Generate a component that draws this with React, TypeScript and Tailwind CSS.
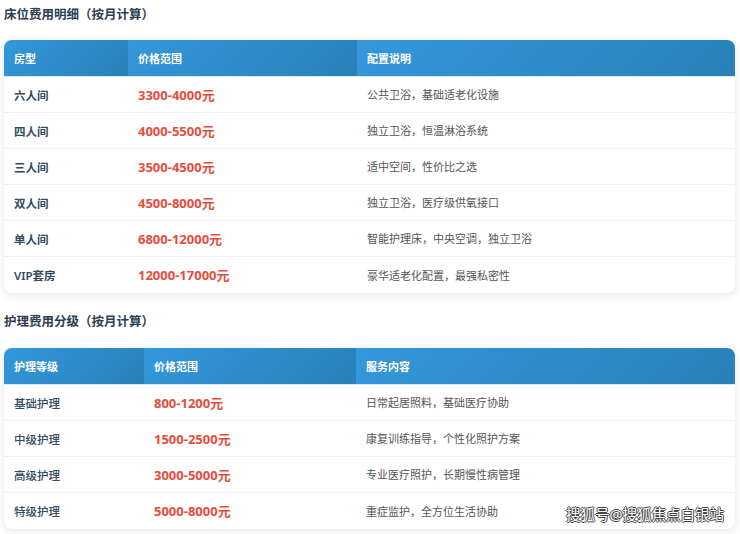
import React from "react";

const font = { fontFamily: '"Noto Sans", "Noto Sans CJK SC", sans-serif' };

type Row = [string, string, string];

const beds: Row[] = [
  ["六人间", "3300-4000元", "公共卫浴，基础适老化设施"],
  ["四人间", "4000-5500元", "独立卫浴，恒温淋浴系统"],
  ["三人间", "3500-4500元", "适中空间，性价比之选"],
  ["双人间", "4500-8000元", "独立卫浴，医疗级供氧接口"],
  ["单人间", "6800-12000元", "智能护理床，中央空调，独立卫浴"],
  ["VIP套房", "12000-17000元", "豪华适老化配置，最强私密性"],
];

const care: Row[] = [
  ["基础护理", "800-1200元", "日常起居照料，基础医疗协助"],
  ["中级护理", "1500-2500元", "康复训练指导，个性化照护方案"],
  ["高级护理", "3000-5000元", "专业医疗照护，长期慢性病管理"],
  ["特级护理", "5000-8000元", "重症监护，全方位生活协助"],
];

function Table({
  heads,
  rows,
  cols,
  firstWeight,
}: {
  heads: [string, string, string];
  rows: Row[];
  cols: string;
  firstWeight: string;
}) {
  return (
    <div className="rounded-lg overflow-hidden bg-white shadow-[0_2px_10px_rgba(0,0,0,0.1)]">
      <div className={`grid ${cols} h-[37px] border-b border-[#d6e9f7]`}>
        {heads.map((h) => (
          <div
            key={h}
            className="flex items-center pl-[10px] pt-[3px] text-[11px] font-bold text-white bg-[linear-gradient(135deg,#3498db,#2980b9)]"
          >
            {h}
          </div>
        ))}
      </div>
      {rows.map((r, i) => (
        <div
          key={r[0]}
          className={`grid ${cols} h-[36px] items-center pt-[2px] ${
            i < rows.length - 1 ? "border-b border-[#f0f0f0]" : ""
          }`}
        >
          <div className={`pl-[10px] text-[11.5px] ${firstWeight} text-[#34495e]`}>{r[0]}</div>
          <div className="pl-[10px] text-[13px] font-bold text-[#e74c3c]">{r[1]}</div>
          <div className="pl-[10px] text-[11px] text-[#555]">{r[2]}</div>
        </div>
      ))}
    </div>
  );
}

export default function App() {
  return (
    <div style={font} className="w-[740px] h-[534px] bg-white relative overflow-hidden">
      <div className="pl-[4px] pr-[5px]">
        <div className="h-[40px] pt-[6px] text-[12.5px] font-bold text-[#2c3e50] leading-[18px]">
          床位费用明细（按月计算）
        </div>
        <Table
          heads={["房型", "价格范围", "配置说明"]}
          rows={beds}
          cols="grid-cols-[124px_229px_1fr]"
          firstWeight="font-semibold"
        />
        <div className="h-[55px] pt-[20px] text-[12.5px] font-bold text-[#2c3e50] leading-[18px]">
          护理费用分级（按月计算）
        </div>
        <Table
          heads={["护理等级", "价格范围", "服务内容"]}
          rows={care}
          cols="grid-cols-[140px_212px_1fr]"
          firstWeight="font-medium"
        />
      </div>
      <div className="absolute right-[16px] bottom-[8px] text-[14.5px] text-white [text-shadow:_-1px_0_#444,1px_0_#444,0_-1px_#444,0_1px_#444]">
        搜狐号@搜狐焦点白银站
      </div>
    </div>
  );
}
